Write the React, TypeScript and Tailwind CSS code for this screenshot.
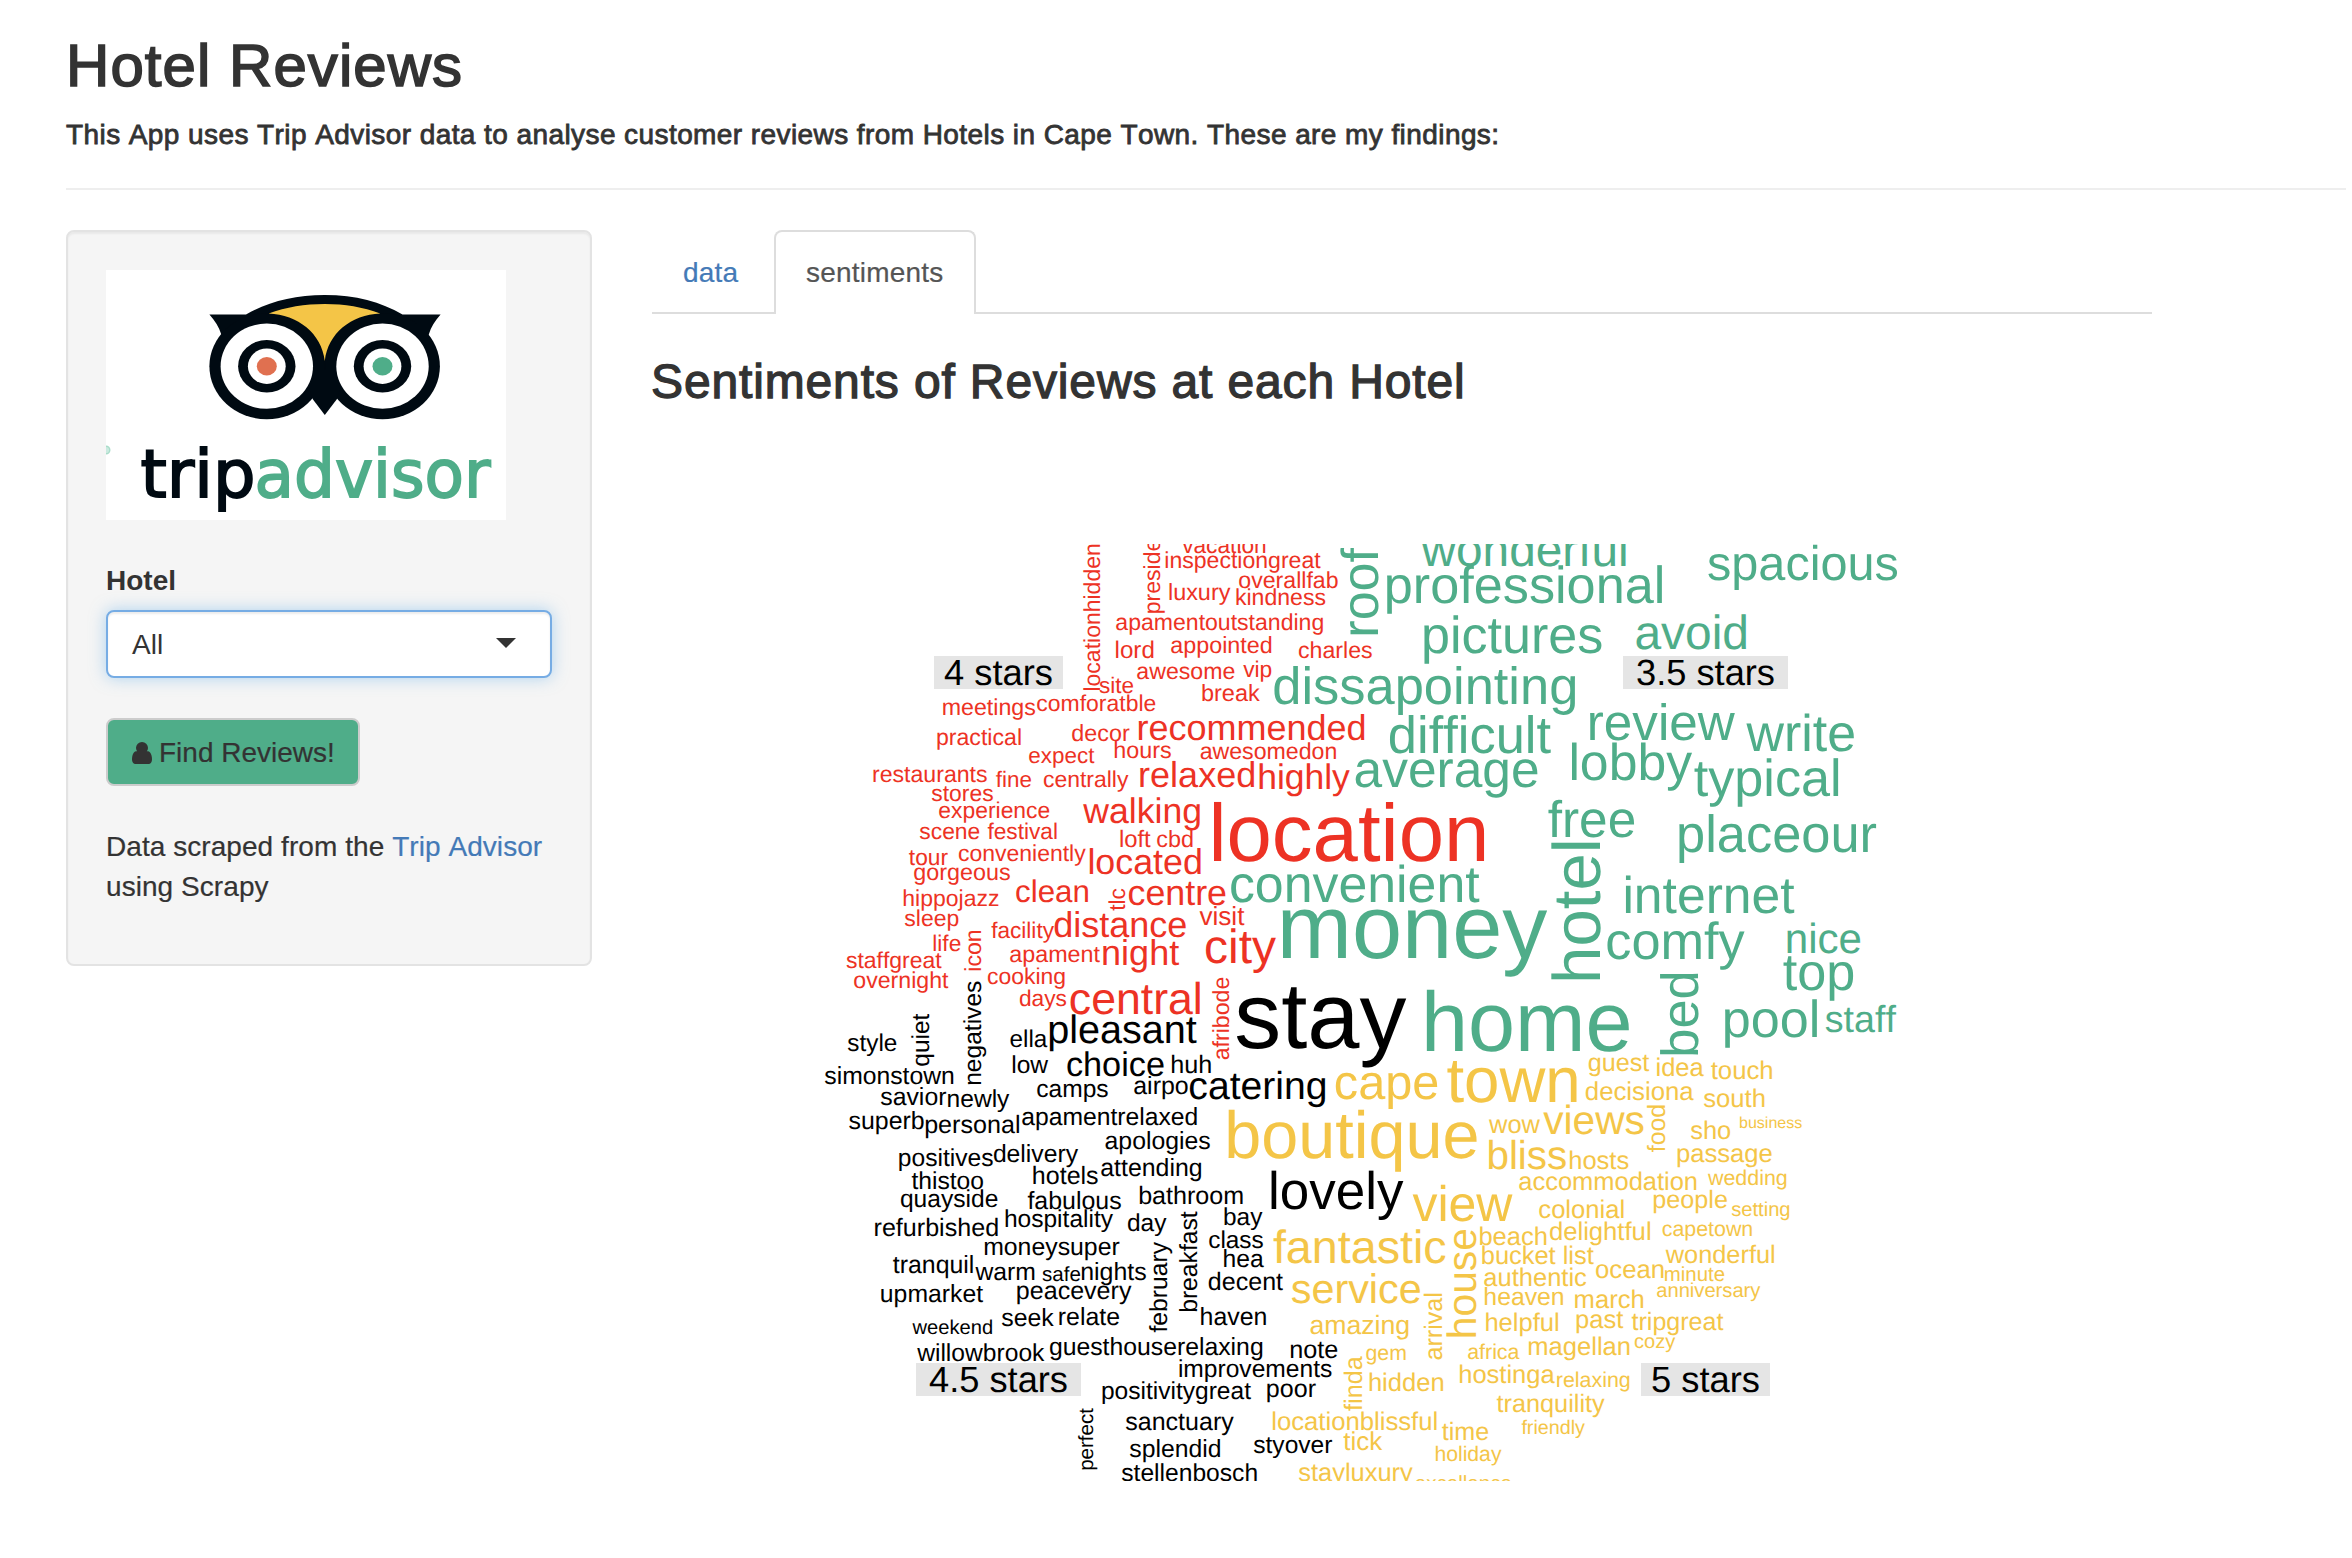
import React from "react";

/* ---------- Word cloud ---------- */

// [word, left edge, baseline, right edge]
type Across = [string, number, number, number];
// [word, baseline x, bottom edge, top edge] for words that read upwards
type Upward = [string, number, number, number];

const ADVANCE: Record<string, number> = {
  a: 0.556, b: 0.556, c: 0.5, d: 0.556, e: 0.556, f: 0.278, g: 0.556, h: 0.556, i: 0.222,
  j: 0.222, k: 0.5, l: 0.222, m: 0.833, n: 0.556, o: 0.556, p: 0.556, q: 0.556, r: 0.333,
  s: 0.5, t: 0.278, u: 0.556, v: 0.5, w: 0.722, x: 0.5, y: 0.5, z: 0.5, " ": 0.278, ".": 0.278,
};

const advance = (s: string) => [...s].reduce((n, c) => n + (ADVANCE[c] ?? 0.556), 0);
const leftBearing = (c: string) =>
  "bhiklmnpru".includes(c) ? 0.066 : "tfvwyxz".includes(c) ? 0.015 : 0.037;
const rightBearing = (c: string) =>
  "dhilmnquj".includes(c) ? 0.067 : "rtfvwyxkz".includes(c) ? 0.01 : 0.035;

function fit(word: string, span: number) {
  const lb = leftBearing(word[0]);
  const rb = rightBearing(word[word.length - 1]);
  const size = span / (advance(word) - lb - rb);
  return { size, offset: lb * size };
}

const four: { across: Across[]; up: Upward[] } = {
  up: [
    ["locationhidden", 1099, 689.5, 544.3],
    ["preside", 1159, 612.3, 538.9],
    ["icon", 980, 969.7, 930.3],
    ["tlc", 1124.7, 910, 888.3],
    ["afribode", 1228, 1059, 977],
  ],
  across: [
    ["site", 1099.3, 692.3, 1132.7],
    ["meetings", 942.7, 714.3, 1034.6],
    ["comforatble", 1036.7, 710.7, 1155],
    ["practical", 937, 744.3, 1020],
    ["decor", 1071.7, 740.3, 1129],
    ["expect", 1028.7, 762.3, 1093.7],
    ["hours", 1114.3, 757.3, 1170.3],
    ["restaurants", 873, 781.7, 986.3],
    ["fine", 995.7, 786.3, 1030.7],
    ["centrally", 1043.3, 786.3, 1127.7],
    ["apamentoutstanding", 1115.7, 629.3, 1323],
    ["lord", 1115.7, 657.3, 1152.7],
    ["awesome", 1136.7, 678.3, 1234],
    ["appointed", 1170.7, 652.7, 1270.7],
    ["vacation", 1182, 552.7, 1264.7],
    ["inspectiongreat", 1165.3, 567.7, 1320],
    ["luxury", 1169, 599.7, 1229.7],
    ["overallfab", 1238.7, 587.7, 1337.3],
    ["kindness", 1236, 604.7, 1324.7],
    ["charles", 1298.3, 657.3, 1371.3],
    ["vip", 1243, 676.7, 1271],
    ["break", 1202, 700.3, 1259],
    ["recommended", 1138.3, 739.7, 1363.7],
    ["awesomedon", 1200, 758.3, 1335.3],
    ["relaxed", 1140, 786, 1253.3],
    ["highly", 1259, 788, 1349],
    ["stores", 931.7, 800, 992.3],
    ["experience", 938.7, 817.3, 1049],
    ["scene", 919.7, 838.3, 979],
    ["festival", 987.3, 838.3, 1056],
    ["tour", 908.7, 864.7, 947.3],
    ["conveniently", 958.3, 860.3, 1085],
    ["gorgeous", 913.7, 879.3, 1009.3],
    ["hippojazz", 903.3, 905.7, 998.7],
    ["sleep", 904.7, 925.7, 958],
    ["life", 933.3, 950.3, 960],
    ["staffgreat", 846.3, 967.7, 941],
    ["overnight", 853.7, 987.7, 947.7],
    ["facility", 991, 937.3, 1053.3],
    ["apament", 1009.7, 961, 1099.3],
    ["cooking", 987.3, 983.7, 1064.7],
    ["days", 1019.3, 1005, 1065.7],
    ["walking", 1083.3, 822.7, 1200.3],
    ["loft", 1120, 846.7, 1150],
    ["cbd", 1156.7, 846.7, 1192],
    ["located", 1089.3, 873.7, 1200],
    ["clean", 1015.7, 901, 1087.3],
    ["centre", 1128.3, 904.7, 1225.3],
    ["distance", 1054, 936.7, 1185.7],
    ["night", 1103, 964.3, 1178.3],
    ["central", 1070, 1013, 1199.3],
    ["location", 1213.3, 860.7, 1483.3],
    ["visit", 1199.3, 924.7, 1243.7],
    ["city", 1205.3, 962, 1275],
  ],
};

const threeFive: { across: Across[]; up: Upward[] } = {
  up: [
    ["roof", 1377, 633.7, 548],
    ["hotel", 1599, 979, 842.3],
    ["bed", 1697, 1053.7, 973.3],
  ],
  across: [
    ["wonderful", 1421.7, 565, 1625],
    ["professional", 1386.7, 602.7, 1661.3],
    ["pictures", 1424, 652, 1601],
    ["avoid", 1635.7, 648, 1745.3],
    ["spacious", 1708.3, 579, 1896.7],
    ["dissapointing", 1273.7, 703.7, 1576],
    ["difficult", 1389.3, 752.7, 1550],
    ["average", 1355, 786, 1537.3],
    ["review", 1589.7, 739, 1733.7],
    ["write", 1746.7, 750, 1853.7],
    ["lobby", 1571.3, 779, 1691],
    ["typical", 1694, 795, 1837.7],
    ["convenient", 1230.3, 901.7, 1478.7],
    ["money", 1282.3, 957, 1546],
    ["home", 1426, 1050, 1629],
    ["free", 1548, 836, 1634],
    ["placeour", 1679, 851.7, 1876],
    ["internet", 1625.3, 912, 1793.7],
    ["comfy", 1606.7, 958.7, 1743.7],
    ["nice", 1787, 952, 1860],
    ["top", 1783, 989, 1853],
    ["pool", 1724.7, 1036.7, 1816.3],
    ["staff", 1825.7, 1031, 1895],
  ],
};

const fourFive: { across: Across[]; up: Upward[] } = {
  up: [
    ["quiet", 928.7, 1065.3, 1013.3],
    ["negatives", 980.7, 1083.7, 981],
    ["february", 1166, 1331.7, 1241.7],
    ["breakfast", 1196, 1310.7, 1211],
    ["perfect", 1092.7, 1469, 1407.7],
  ],
  across: [
    ["stay", 1237.3, 1047.5, 1405],
    ["pleasant", 1049.3, 1042, 1196],
    ["style", 847.7, 1050.7, 896],
    ["ella", 1010, 1046.7, 1046],
    ["low", 1012.3, 1072.7, 1047.3],
    ["choice", 1066.7, 1075.3, 1163.3],
    ["huh", 1171.3, 1072, 1210],
    ["simonstown", 824.7, 1083.3, 952.7],
    ["savior", 880.7, 1104.7, 945.7],
    ["newly", 947.7, 1106.7, 1008.7],
    ["camps", 1036.7, 1096.7, 1107.3],
    ["airpo", 1133.7, 1093.7, 1187.3],
    ["catering", 1189.3, 1098.7, 1325.7],
    ["superb", 849, 1128.7, 923.3],
    ["personal", 925.3, 1132.7, 1018.3],
    ["apamentrelaxed", 1021.7, 1124.7, 1196.3],
    ["apologies", 1105, 1148.7, 1209.3],
    ["positives", 899, 1165.7, 992.3],
    ["delivery", 993.3, 1161.7, 1077.3],
    ["attending", 1100.7, 1175.7, 1201.3],
    ["hotels", 1033, 1183.3, 1097.3],
    ["thistoo", 911.3, 1188.7, 982.7],
    ["quayside", 900.3, 1206.3, 997],
    ["fabulous", 1027.3, 1208.7, 1120.3],
    ["bathroom", 1139.3, 1203.3, 1242],
    ["refurbished", 874.7, 1235.7, 997],
    ["hospitality", 1005, 1226.7, 1112.3],
    ["day", 1127.3, 1230.7, 1165.7],
    ["moneysuper", 984.3, 1254.7, 1119],
    ["lovely", 1271, 1208.3, 1402.4],
    ["bay", 1224.1, 1224.7, 1261.6],
    ["class", 1208.6, 1247.7, 1262.4],
    ["hea", 1223.7, 1266.7, 1262.4],
    ["note", 1290.3, 1357.3, 1336.9],
    ["tranquil", 892.7, 1272, 972.3],
    ["warm", 975.3, 1279, 1033.7],
    ["safe", 1042.3, 1280.7, 1079.7],
    ["nights", 1081.3, 1279.7, 1145.3],
    ["upmarket", 881, 1301.7, 982.3],
    ["peacevery", 1017, 1298.7, 1130.7],
    ["seek", 1001.7, 1325.7, 1053],
    ["relate", 1059, 1324.7, 1118.7],
    ["weekend", 912.3, 1333.7, 991.3],
    ["decent", 1208.3, 1289.3, 1282.3],
    ["haven", 1200.7, 1324, 1265.3],
    ["willowbrook", 917, 1360, 1043.7],
    ["guesthouserelaxing", 1049.3, 1354.7, 1262.3],
    ["improvements", 1179, 1376.7, 1331],
    ["positivitygreat", 1102, 1398.7, 1250.3],
    ["poor", 1267, 1396.7, 1315.3],
    ["sanctuary", 1125.7, 1429.7, 1233],
    ["splendid", 1129.7, 1456.7, 1219.3],
    ["styover", 1253.7, 1452.7, 1331.7],
    ["stellenbosch", 1121.7, 1480.7, 1256],
  ],
};

const five: { across: Across[]; up: Upward[] } = {
  up: [
    ["food", 1664.5, 1151.3, 1105],
    ["house", 1475, 1336, 1229],
    ["arrival", 1441.6, 1359, 1293.3],
    ["finda", 1361.7, 1410, 1356.7],
  ],
  across: [
    ["cape", 1335.1, 1098.7, 1437.1],
    ["town", 1446.9, 1101.7, 1575.9],
    ["guest", 1588.2, 1070, 1648.6],
    ["idea", 1656.7, 1075.7, 1702.4],
    ["touch", 1710.6, 1078.7, 1771.4],
    ["decisiona", 1585.3, 1099.7, 1692.2],
    ["south", 1703.7, 1106.7, 1763.7],
    ["boutique", 1228.2, 1157.7, 1476.7],
    ["wow", 1489, 1132.7, 1539.2],
    ["views", 1543.3, 1133.7, 1642.9],
    ["sho", 1690.6, 1138.7, 1729.8],
    ["business", 1739.6, 1127, 1801.2],
    ["bliss", 1488.6, 1168.7, 1565.3],
    ["hosts", 1569.4, 1168.7, 1627.8],
    ["passage", 1677.1, 1161.7, 1771.4],
    ["view", 1412.7, 1220.7, 1511.4],
    ["accommodation", 1518.8, 1189.7, 1695.9],
    ["wedding", 1707.8, 1184.7, 1786.5],
    ["people", 1653.5, 1207.7, 1726.5],
    ["setting", 1731.4, 1215.7, 1789.4],
    ["colonial", 1538.8, 1217.7, 1622.9],
    ["fantastic", 1273.1, 1262.7, 1444.5],
    ["beach", 1479.6, 1244.7, 1545.7],
    ["delightful", 1549.4, 1239.7, 1649.4],
    ["capetown", 1662, 1235.7, 1751.4],
    ["bucket list", 1482, 1263.7, 1593.1],
    ["wonderful", 1665.7, 1262.7, 1773.5],
    ["service", 1291.8, 1302, 1419.8],
    ["authentic", 1483.8, 1285.3, 1585.5],
    ["ocean", 1595.5, 1277.7, 1662.8],
    ["minute", 1664.6, 1280, 1723.8],
    ["anniversary", 1656.5, 1296.7, 1759.7],
    ["heaven", 1484.5, 1304.3, 1562.5],
    ["march", 1574.8, 1307.7, 1642.5],
    ["amazing", 1309.9, 1333.7, 1408.7],
    ["helpful", 1485.6, 1330.7, 1557.4],
    ["past", 1576.2, 1327.3, 1622.5],
    ["tripgreat", 1631.4, 1329.3, 1722.7],
    ["magellan", 1528.5, 1354.7, 1628.8],
    ["cozy", 1634.3, 1347.3, 1674.7],
    ["gem", 1365.8, 1359.3, 1405],
    ["africa", 1467.5, 1358.7, 1518.2],
    ["hidden", 1369.1, 1390.7, 1442.4],
    ["hostinga", 1459.4, 1382.7, 1553.3],
    ["relaxing", 1556.7, 1386.7, 1629.5],
    ["tranquility", 1496.4, 1411.7, 1603.9],
    ["locationblissful", 1272.5, 1429.7, 1436],
    ["time", 1441.6, 1439.7, 1487.8],
    ["friendly", 1521.2, 1433.7, 1584.3],
    ["tick", 1343.2, 1449.3, 1381.3],
    ["holiday", 1435.3, 1460.7, 1500.8],
    ["stayluxury", 1298.8, 1480.7, 1412],
    ["excellence", 1415, 1489, 1510.8],
  ],
};

function Words({ data, className }: { data: { across: Across[]; up: Upward[] }; className: string }) {
  return (
    <g className={className} transform="translate(0.5 0.5)">
      {data.across.map(([word, left, baseline, right]) => {
        const { size, offset } = fit(word, right - left);
        return (
          <text key={word} x={left - offset} y={baseline} fontSize={size}>
            {word}
          </text>
        );
      })}
      {data.up.map(([word, baseline, bottom, top]) => {
        const { size, offset } = fit(word, bottom - top);
        return (
          <text
            key={word}
            transform={`translate(${baseline} ${bottom + offset}) rotate(-90)`}
            fontSize={size}
          >
            {word}
          </text>
        );
      })}
    </g>
  );
}

const labels = [
  { text: "4 stars", x: 934, y: 656, w: 129 },
  { text: "3.5 stars", x: 1623, y: 656, w: 165 },
  { text: "4.5 stars", x: 916, y: 1363, w: 165 },
  { text: "5 stars", x: 1641, y: 1363, w: 129 },
];

function WordCloud() {
  return (
    <svg
      viewBox="652 544 1500 937"
      className="mt-[137px] block h-[937px] w-[1500px] overflow-hidden [font-kerning:none] [font-variant-ligatures:none] [text-rendering:geometricPrecision]"
    >
      {labels.map((l) => (
        <g key={l.text}>
          <rect x={l.x} y={l.y} width={l.w} height={33} className="fill-[#e5e5e5]" />
          <text
            x={l.x + l.w / 2}
            y={l.y + 29.3}
            textAnchor="middle"
            fontSize={36.5}
            textLength={l.w === 129 ? 109 : 139}
            lengthAdjust="spacingAndGlyphs"
            className="fill-black"
          >
            {l.text}
          </text>
        </g>
      ))}
      <Words data={four} className="fill-[#ed3224]" />
      <Words data={threeFive} className="fill-[#4fad89]" />
      <Words data={fourFive} className="fill-black" />
      <Words data={five} className="fill-[#f4c547]" />
    </svg>
  );
}

/* ---------- Sidebar ---------- */

function Eye({ cx, pupil }: { cx: number; pupil: string }) {
  return (
    <g>
      <ellipse cx={cx} cy={96.2} rx={46.2} ry={42.6} fill="#fff" />
      <ellipse cx={cx} cy={96.2} rx={28.7} ry={26.2} fill="#000a12" />
      <ellipse cx={cx} cy={96.2} rx={18.9} ry={17.7} fill="#fff" />
      <ellipse cx={cx} cy={96.2} rx={10} ry={9.2} fill={pupil} />
    </g>
  );
}

function Logo() {
  return (
    <svg viewBox="0 0 400 250" className="block h-[250px] w-[400px] bg-white">
      <path
        d="M103.400 44.500H140C162 32 188 25 218.800 25S275 32 296.500 44.500H334.600C329 51 325 57 322.800 64.400L290 110H148L115.300 64.400C113 57 109 51 103.400 44.500Z"
        fill="#000a12"
      />
      <ellipse cx={160.8} cy={96.2} rx={57.4} ry={53} fill="#000a12" />
      <ellipse cx={276.5} cy={96.2} rx={57.4} ry={53} fill="#000a12" />
      <path d="M206.600 129L218.800 145L231 129L240 100H198Z" fill="#000a12" />
      <path
        d="M162.600 43.500C180 37 199 34 218.800 34S257 37 274.300 43.500C245 45 222 63 218.800 91C215.500 63 192 45 162.600 43.500Z"
        fill="#f4c547"
      />
      <Eye cx={160.8} pupil="#e07050" />
      <Eye cx={276.5} pupil="#4fad89" />
      <circle cx={0} cy={180} r={3.8} fill="#c9eadf" stroke="#a9dcc9" strokeWidth={1.4} />
      <g className="font-['DejaVu_Sans',sans-serif] text-[66px]" strokeWidth={1.8}>
        <text
          x={34.5}
          y={227}
          textLength={115}
          lengthAdjust="spacingAndGlyphs"
          fill="#000a12"
          stroke="#000a12"
        >
          trip
        </text>
        <text
          x={148.5}
          y={227}
          textLength={236}
          lengthAdjust="spacingAndGlyphs"
          fill="#4fad89"
          stroke="#4fad89"
        >
          advisor
        </text>
      </g>
    </svg>
  );
}

function UserIcon() {
  return (
    <svg viewBox="0 128 1280 1408" className="h-[22px] w-5 fill-current">
      <path d="M1280 1271q0 109-62.500 187t-150.500 78H213q-88 0-150.500-78T0 1271q0-85 8.500-160.500t31.500-152T98.500 829t94-89T327 704q131 128 313 128t313-128q76 0 134.500 36t94 89 58.500 129.500 31.500 152 8.500 160.500zM1024 512q0 159-112.500 271.500T640 896 368.500 783.500 256 512t112.500-271.500T640 128t271.500 112.500T1024 512z" />
    </svg>
  );
}

function Sidebar() {
  return (
    <aside className="h-[736px] w-[526px] shrink-0 rounded-lg border-2 border-[#e3e3e3] bg-[#f5f5f5] p-[38px] shadow-[inset_0_2px_2px_rgba(0,0,0,0.05)]">
      <Logo />
      <label className="mt-[41px] block font-bold">Hotel</label>
      <button className="mt-[9px] flex h-[68px] w-full items-center justify-between rounded-lg border-2 border-[#76ace4] bg-white pt-px pr-[34px] pl-6 shadow-[inset_0_2px_2px_rgba(0,0,0,0.075),0_0_16px_rgba(102,175,233,0.5)]">
        All
        <svg viewBox="0 0 20 10" className="-mt-1 h-2.5 w-5 fill-[#333]">
          <path d="M0 0H20L10 10Z" />
        </svg>
      </button>
      <button className="mt-10 flex h-[68px] w-[254px] items-center gap-[7px] rounded-lg border-2 border-[#ccc] bg-[#4fad89] pt-px pl-6 whitespace-nowrap [-webkit-text-stroke:0.2px_#333]">
        <UserIcon />
        Find Reviews!
      </button>
      <p className="mt-[41px] whitespace-nowrap tracking-[0.06px] [-webkit-text-stroke:0.2px]">
        Data scraped from the <a className="text-[#447ab7]">Trip Advisor</a>
        <br />
        using Scrapy
      </p>
    </aside>
  );
}

/* ---------- Page ---------- */

export default function App() {
  return (
    <div className="min-h-[1558px] w-[2352px] overflow-hidden bg-white pt-[33px] pl-[66px] font-['Liberation_Sans',Arial,sans-serif] text-[28px] leading-10 text-[#333] [font-kerning:none]">
      <h1 className="text-[60px] leading-[66px] tracking-[1.05px] [-webkit-text-stroke:1.6px_#333]">
        Hotel Reviews
      </h1>
      <h2 className="mt-4 tracking-[0.42px] [-webkit-text-stroke:0.8px_#333]">
        This App uses Trip Advisor data to analyse customer reviews from Hotels in Cape Town. These are my
        findings:
      </h2>
      <hr className="mt-[33px] w-[2280px] border-t-2 border-[#eee]" />
      <div className="mt-10 flex gap-[60px]">
        <Sidebar />
        <main className="w-[1500px]">
          <nav className="flex h-[84px] gap-1 border-b-2 border-[#ddd] tracking-[0.2px] [-webkit-text-stroke:0.2px]">
            <a className="h-[84px] w-[118px] pt-[23px] pl-[31px] text-[#447ab7]">data</a>
            <a className="h-[84px] w-[202px] rounded-t-lg border-2 border-b-0 border-[#ddd] bg-white pt-[21px] pl-[30px] text-[#555]">
              sentiments
            </a>
          </nav>
          <h3 className="mt-[41px] -ml-px h-[53px] text-[48px] leading-[53px] tracking-[0.86px] [-webkit-text-stroke:1.3px_#333]">
            Sentiments of Reviews at each Hotel
          </h3>
          <div className="-mt-px">
            <WordCloud />
          </div>
        </main>
      </div>
    </div>
  );
}
